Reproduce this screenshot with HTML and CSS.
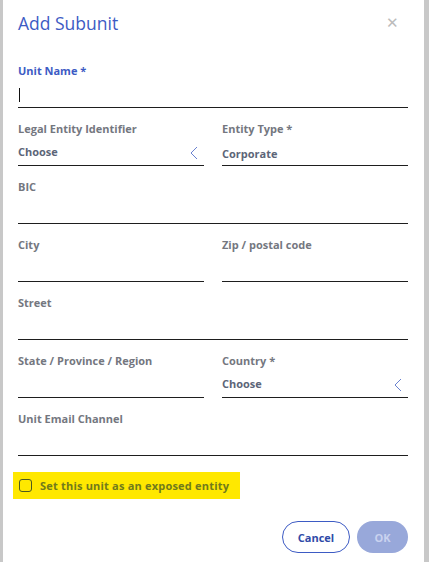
FILE: index.html
```html
<!DOCTYPE html>
<html>
<head>
<meta charset="utf-8">
<link rel="stylesheet" href="styles.css">
</head>
<body>
<div class="dialog">
  <div class="header">
    <h1 class="title">Add Subunit</h1>
    <span class="close">&#x2715;</span>
  </div>
  <div class="form">
    <div class="field full">
      <div class="label active">Unit Name *</div>
      <div class="value"><span class="cursor"></span></div>
    </div>
    <div class="field">
      <div class="label">Legal Entity Identifier</div>
      <div class="value select"><span class="text">Choose</span>
        <svg class="chev" width="8" height="14" viewBox="0 0 8 14"><polyline points="7,1 1,7 7,13" fill="none" stroke="#6a82d0" stroke-width="1"/></svg>
      </div>
    </div>
    <div class="field">
      <div class="label">Entity Type *</div>
      <div class="value"><span class="text low">Corporate</span></div>
    </div>
    <div class="field full">
      <div class="label">BIC</div>
      <div class="value"></div>
    </div>
    <div class="field">
      <div class="label">City</div>
      <div class="value"></div>
    </div>
    <div class="field">
      <div class="label">Zip / postal code</div>
      <div class="value"></div>
    </div>
    <div class="field full">
      <div class="label">Street</div>
      <div class="value"></div>
    </div>
    <div class="field">
      <div class="label">State / Province / Region</div>
      <div class="value"></div>
    </div>
    <div class="field">
      <div class="label">Country *</div>
      <div class="value select"><span class="text">Choose</span>
        <svg class="chev" width="8" height="14" viewBox="0 0 8 14"><polyline points="7,1 1,7 7,13" fill="none" stroke="#6a82d0" stroke-width="1"/></svg>
      </div>
    </div>
    <div class="field full">
      <div class="label">Unit Email Channel</div>
      <div class="value"></div>
    </div>
  </div>
  <div class="check-row">
    <label class="check">
      <span class="box"></span>
      <span class="check-text">Set this unit as an exposed entity</span>
    </label>
  </div>
  <div class="actions">
    <button class="btn cancel">Cancel</button>
    <button class="btn ok">OK</button>
  </div>
</div>
</body>
</html>
```

FILE: styles.css
```css
html, body {
  margin: 0;
  padding: 0;
  height: 100%;
}
body {
  background: #c8c8c8;
  font-family: "Open Sans", "Liberation Sans", sans-serif;
}
.dialog {
  margin: 0 5px 0 3px;
  background: #ffffff;
  height: 562px;
  box-sizing: border-box;
  padding: 0 16px 0 15px;
}
.header {
  height: 63px;
  display: flex;
  justify-content: space-between;
  align-items: flex-start;
}
.title {
  margin: 11px 0 0 0;
  font-size: 17.5px;
  line-height: 24px;
  font-weight: 400;
  color: #3d5bc4;
  letter-spacing: 0;
}
.close {
  margin: 12px 9px 0 0;
  font-size: 15px;
  line-height: 20px;
  color: #bcbcbc;
}
.form {
  display: grid;
  grid-template-columns: 186px 186px;
  column-gap: 18px;
  row-gap: 13px;
}
.field.full {
  grid-column: 1 / 3;
}
.label {
  height: 16px;
  line-height: 16px;
  font-size: 11px;
  font-weight: 700;
  color: #74777f;
  white-space: nowrap;
}
.label.active {
  color: #3d5bc4;
}
.value {
  height: 28px;
  border-bottom: 1px solid #1e1e1e;
  display: flex;
  align-items: center;
  justify-content: space-between;
  box-sizing: content-box;
}
.text {
  font-size: 11px;
  font-weight: 700;
  color: #5c6578;
  line-height: 16px;
  margin-top: 2px;
}
.text.low {
  margin-top: 6px;
}
.chev {
  margin-right: 6px;
  margin-top: 4px;
}
.cursor {
  display: block;
  width: 1px;
  height: 14px;
  background: #111;
  margin-left: 1px;
  margin-top: 3px;
}
.check-row {
  margin-top: 16px;
  margin-left: -5px;
}
.check {
  display: inline-flex;
  align-items: center;
  background: #ffe800;
  width: 227px;
  height: 27px;
  box-sizing: border-box;
  padding-left: 6px;
}
.box {
  width: 11px;
  height: 11px;
  border: 1px solid #4e5a1e;
  border-radius: 3px;
  flex: none;
}
.check-text {
  margin-left: 8px;
  font-size: 11px;
  font-weight: 700;
  color: #707a1c;
  white-space: nowrap;
  letter-spacing: 0.2px;
}
.actions {
  display: flex;
  justify-content: flex-end;
  gap: 7px;
  margin-top: 22px;
}
.btn {
  height: 32px;
  border-radius: 16px;
  font-family: "Open Sans", "Liberation Sans", sans-serif;
  font-size: 11px;
  font-weight: 700;
  padding: 0;
  box-sizing: border-box;
}
.cancel {
  width: 68px;
  background: #ffffff;
  border: 1px solid #3d5bc4;
  color: #2f4aa8;
}
.ok {
  width: 51px;
  background: #98a8da;
  border: none;
  color: #c9d2ef;
}
```
